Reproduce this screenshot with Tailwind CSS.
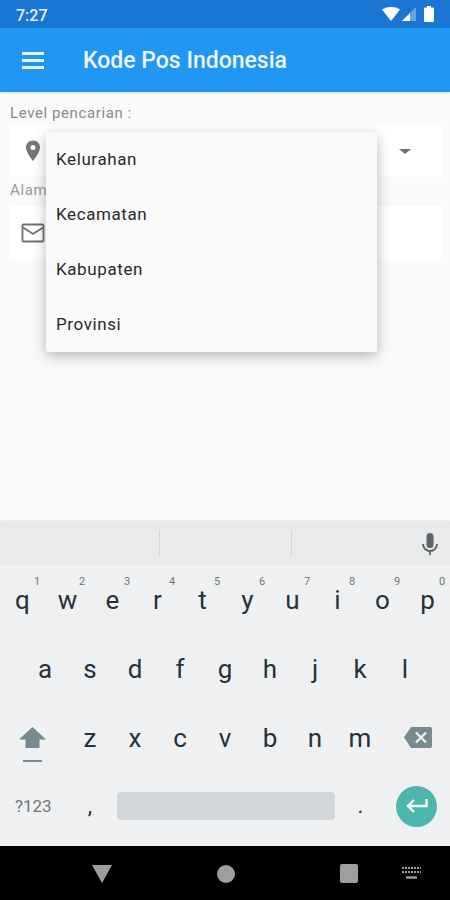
<!DOCTYPE html>
<html lang="en">
  <head>
    <meta charset="UTF-8" />
    <meta name="viewport" content="width=device-width, initial-scale=1.0" />
    <title>Kode Pos Indonesia</title>
    <script src="https://cdn.jsdelivr.net/npm/@tailwindcss/browser@4"></script>
  </head>
  <body class="w-[450px] h-[900px] overflow-hidden flex flex-col bg-[#fafafa] font-['Roboto',sans-serif]">
    <!-- status bar -->
    <div class="h-[28px] shrink-0 bg-[#1976d2] flex items-center justify-between pl-[16px] pr-[16px] text-white">
      <span class="pt-[3px] text-[16px] font-medium leading-none text-[#e8f1fa]">7:27</span>
      <div class="flex items-center">
        <svg class="w-[18px] h-[14px]" viewBox="0 0 18 14"><path d="M0 2.5C2.5.8 5.6 0 9 0s6.500.8 9 2.500L9 14z" fill="#fff" /></svg>
        <svg class="w-[15px] h-[14px] ml-[2px]" viewBox="0 0 15 14"><path d="M0 14 14 0v14z" fill="#fff" fill-opacity=".35" /><path d="M0 14 8 6v8z" fill="#fff" /></svg>
        <svg class="w-[10px] h-[16px] ml-[7px]" viewBox="0 0 10 16"><path d="M3 0h4v1.500h2a1 1 0 0 1 1 1V15a1 1 0 0 1-1 1H1a1 1 0 0 1-1-1V2.500a1 1 0 0 1 1-1h2z" fill="#fff" /></svg>
      </div>
    </div>

    <!-- toolbar -->
    <div class="h-[64px] shrink-0 bg-[#2196f3] flex items-center pl-[22px] shadow-[0_1px_3px_rgba(0,0,0,0.12)] relative z-10">
      <div class="w-[22px] flex flex-col gap-[4px]">
        <div class="h-[3px] bg-[#e8f3fd]"></div>
        <div class="h-[3px] bg-[#e8f3fd]"></div>
        <div class="h-[3px] bg-[#e8f3fd]"></div>
      </div>
      <h1 class="ml-[39px] text-[23px] font-medium text-[#eef6fe] leading-none">Kode Pos Indonesia</h1>
    </div>

    <!-- form -->
    <div class="relative h-[429px] shrink-0 px-[10px] pt-[12px]">
      <p class="text-[15px] leading-[18px] text-[#8a8a8a] tracking-[0.6px]">Level pencarian :</p>
      <div class="mt-[3px] mr-[-1px] h-[52px] bg-white flex items-center justify-between pl-[13px] pr-[30px]">
        <svg class="w-[20px] h-[24px]" viewBox="0 0 20 24"><path d="M10 1.500C5.600 1.500 3 4.800 3 8.500c0 5 7 13.500 7 13.500s7-8.500 7-13.500c0-3.700-2.600-7-7-7zm0 9.500a2.500 2.500 0 1 1 0-5 2.500 2.500 0 0 1 0 5z" fill="#757575" /></svg>
        <div class="w-0 h-0 border-x-[6px] border-x-transparent border-t-[5px] border-t-[#6f6f6f]"></div>
      </div>
      <p class="mt-[4px] text-[15px] leading-[18px] text-[#9a9a9a] tracking-[0.6px]">Alamat</p>
      <div class="mt-[7px] mr-[-1px] h-[54px] bg-white flex items-center pl-[11px]">
        <svg class="w-[24px] h-[20px]" viewBox="0 0 24 20"><path d="M2.500 1.500h19a1 1 0 0 1 1 1v15a1 1 0 0 1-1 1h-19a1 1 0 0 1-1-1v-15a1 1 0 0 1 1-1z" fill="none" stroke="#6f6f6f" stroke-width="1.800" /><path d="M2 4.500 12 11l10-6.500" fill="none" stroke="#6f6f6f" stroke-width="1.800" /></svg>
      </div>

      <!-- dropdown menu -->
      <div class="absolute left-[46px] top-[40px] w-[331px] h-[220px] bg-[#fafafa] rounded-[2px] shadow-[0_4px_14px_rgba(0,0,0,0.28)] flex flex-col text-[17px] text-[#2a2a2a] tracking-[0.6px]">
        <div class="h-[55px] shrink-0 flex items-center pl-[10px]">Kelurahan</div>
        <div class="h-[55px] shrink-0 flex items-center pl-[10px]">Kecamatan</div>
        <div class="h-[55px] shrink-0 flex items-center pl-[10px]">Kabupaten</div>
        <div class="h-[55px] shrink-0 flex items-center pl-[10px]">Provinsi</div>
      </div>
    </div>

    <!-- keyboard suggestions -->
    <div class="h-[46px] shrink-0 bg-[#e8eaeb] border-b border-[#f4f6f7] flex items-center relative shadow-[0_-1px_2px_rgba(0,0,0,0.06)]">
      <div class="ml-[159px] w-px h-[27px] bg-[#d3d5d6]"></div>
      <div class="ml-[131px] w-px h-[27px] bg-[#d3d5d6]"></div>
      <svg class="ml-[128px] w-[20px] h-[24px]" viewBox="0 0 20 24"><path d="M10 1a3.500 3.500 0 0 0-3.500 3.500v8a3.500 3.500 0 0 0 7 0v-8A3.500 3.500 0 0 0 10 1z" fill="#5f6467" /><path d="M3 12c0 4 3 7 7 7s7-3 7-7" fill="none" stroke="#5f6467" stroke-width="1.800" /><path d="M10 19v4" stroke="#5f6467" stroke-width="1.800" /></svg>
    </div>

    <!-- keyboard -->
    <div class="h-[279px] shrink-0 bg-[#eef0f2] text-[#263238] text-[26px] leading-none">
      <div class="h-[69px] flex pb-[4px]">
        <div class="relative w-[45px] flex items-center justify-center">q<span class="absolute top-[9px] left-[34px] text-[11px] text-[#70777b]">1</span></div>
        <div class="relative w-[45px] flex items-center justify-center">w<span class="absolute top-[9px] left-[34px] text-[11px] text-[#70777b]">2</span></div>
        <div class="relative w-[45px] flex items-center justify-center">e<span class="absolute top-[9px] left-[34px] text-[11px] text-[#70777b]">3</span></div>
        <div class="relative w-[45px] flex items-center justify-center">r<span class="absolute top-[9px] left-[34px] text-[11px] text-[#70777b]">4</span></div>
        <div class="relative w-[45px] flex items-center justify-center">t<span class="absolute top-[9px] left-[34px] text-[11px] text-[#70777b]">5</span></div>
        <div class="relative w-[45px] flex items-center justify-center">y<span class="absolute top-[9px] left-[34px] text-[11px] text-[#70777b]">6</span></div>
        <div class="relative w-[45px] flex items-center justify-center">u<span class="absolute top-[9px] left-[34px] text-[11px] text-[#70777b]">7</span></div>
        <div class="relative w-[45px] flex items-center justify-center">i<span class="absolute top-[9px] left-[34px] text-[11px] text-[#70777b]">8</span></div>
        <div class="relative w-[45px] flex items-center justify-center">o<span class="absolute top-[9px] left-[34px] text-[11px] text-[#70777b]">9</span></div>
        <div class="relative w-[45px] flex items-center justify-center">p<span class="absolute top-[9px] left-[34px] text-[11px] text-[#70777b]">0</span></div>
      </div>
      <div class="h-[69px] flex pl-[22.5px] pb-[4px]">
        <div class="w-[45px] flex items-center justify-center">a</div>
        <div class="w-[45px] flex items-center justify-center">s</div>
        <div class="w-[45px] flex items-center justify-center">d</div>
        <div class="w-[45px] flex items-center justify-center">f</div>
        <div class="w-[45px] flex items-center justify-center">g</div>
        <div class="w-[45px] flex items-center justify-center">h</div>
        <div class="w-[45px] flex items-center justify-center">j</div>
        <div class="w-[45px] flex items-center justify-center">k</div>
        <div class="w-[45px] flex items-center justify-center">l</div>
      </div>
      <div class="h-[69px] flex pb-[4px]">
        <div class="w-[67.500px] flex flex-col items-center justify-center pr-[3px] pt-[14px]">
          <svg class="w-[27px] h-[22px]" viewBox="0 0 27 22"><path d="M13.500 0 27 12.500h-6.500V21h-14v-8.500H0z" fill="#78898f" /></svg>
          <div class="mt-[11px] w-[19px] h-[2px] bg-[#78898f]"></div>
        </div>
        <div class="w-[45px] flex items-center justify-center">z</div>
        <div class="w-[45px] flex items-center justify-center">x</div>
        <div class="w-[45px] flex items-center justify-center">c</div>
        <div class="w-[45px] flex items-center justify-center">v</div>
        <div class="w-[45px] flex items-center justify-center">b</div>
        <div class="w-[45px] flex items-center justify-center">n</div>
        <div class="w-[45px] flex items-center justify-center">m</div>
        <div class="w-[67.500px] flex items-center justify-center pl-[3px]">
          <svg class="w-[28px] h-[21px]" viewBox="0 0 28 21"><path d="M7 0h19a2 2 0 0 1 2 2v17a2 2 0 0 1-2 2H7L0 10.500z" fill="#78898f" /><path d="m12 5.500 10 10m0-10-10 10" stroke="#eef0f2" stroke-width="2.400" /></svg>
        </div>
      </div>
      <div class="h-[64px] flex items-center">
        <div class="w-[67.500px] pr-[1px] text-center text-[17px] text-[#70777b]">?123</div>
        <div class="w-[45px] text-center text-[22px]">,</div>
        <div class="ml-[4px] w-[218px] h-[28px] mr-[3.500px] rounded-[4px] bg-[#d3d7d9]"></div>
        <div class="w-[45px] text-center text-[22px]">.</div>
        <div class="ml-[13px] w-[41px] h-[41px] rounded-full bg-[#4db6ac] flex items-center justify-center">
          <svg class="w-[22px] h-[16px]" viewBox="0 0 22 16"><path d="M20.500 1v7H3" fill="none" stroke="#fff" stroke-width="2.400" /><path d="M8 2 2 8l6 6" fill="none" stroke="#fff" stroke-width="2.400" /></svg>
        </div>
      </div>
    </div>

    <!-- nav bar -->
    <div class="h-[54px] shrink-0 bg-black relative">
      <div class="absolute left-[92px] top-[19px] w-0 h-0 border-x-[10px] border-x-transparent border-t-[18px] border-t-[#9e9e9e]"></div>
      <div class="absolute left-[217px] top-[19px] w-[18px] h-[18px] rounded-full bg-[#9e9e9e]"></div>
      <div class="absolute left-[340px] top-[18px] w-[18px] h-[19px] rounded-[2px] bg-[#9e9e9e]"></div>
      <svg class="absolute left-[402px] top-[21px] w-[19px] h-[13px]" viewBox="0 0 19 13"><path d="M0 1h19M0 5h19" stroke="#9e9e9e" stroke-width="2" stroke-dasharray="2 1" /><path d="M4 10.500h11" stroke="#9e9e9e" stroke-width="2.500" /></svg>
    </div>
  </body>
</html>
